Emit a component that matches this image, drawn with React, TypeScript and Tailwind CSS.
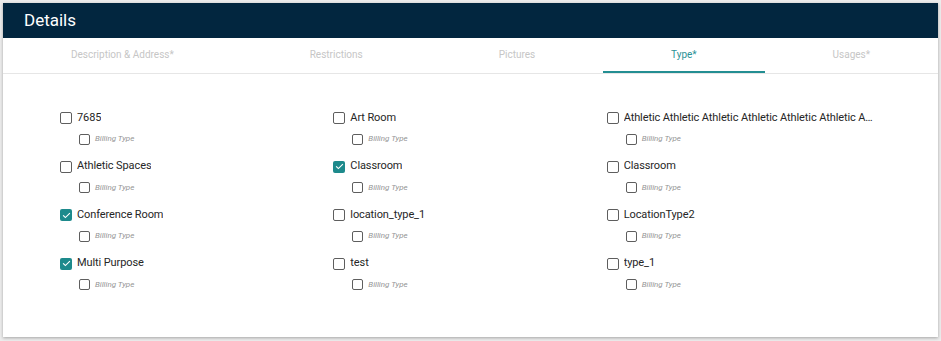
import React from 'react';

type TypeItem = { label: string; checked: boolean };

const tabs = ['Description & Address*', 'Restrictions', 'Pictures', 'Type*', 'Usages*'];

// laid out column by column in the screenshot, rendered row by row in the grid
const items: TypeItem[] = [
  { label: '7685', checked: false },
  { label: 'Art Room', checked: false },
  { label: 'Athletic Athletic Athletic Athletic Athletic Athletic Athletic Athletic', checked: false },
  { label: 'Athletic Spaces', checked: false },
  { label: 'Classroom', checked: true },
  { label: 'Classroom', checked: false },
  { label: 'Conference Room', checked: true },
  { label: 'location_type_1', checked: false },
  { label: 'LocationType2', checked: false },
  { label: 'Multi Purpose', checked: true },
  { label: 'test', checked: false },
  { label: 'type_1', checked: false },
];

function Box({ checked, small }: { checked: boolean; small?: boolean }) {
  if (checked) {
    return (
      <span className="flex h-[12px] w-[12px] shrink-0 items-center justify-center rounded-[2px] bg-[#1d8a8c]">
        <svg width="9" height="9" viewBox="0 0 24 24" fill="none">
          <path d="M4 12.5l5 5L20 6.5" stroke="white" strokeWidth="3" strokeLinecap="square" />
        </svg>
      </span>
    );
  }
  return (
    <span
      className={
        small
          ? 'block h-[11px] w-[11px] shrink-0 rounded-[2px] border-[1.5px] border-[#5e5e5e]'
          : 'block h-[12px] w-[12px] shrink-0 rounded-[2px] border-[1.5px] border-[#5e5e5e]'
      }
    />
  );
}

function TypeCheck({ item }: { item: TypeItem }) {
  return (
    <div className="min-w-0 pr-[7px]">
      <div className="flex h-[16px] items-center gap-[5px]">
        <Box checked={item.checked} />
        <span className="truncate text-[11px] tracking-[-0.1px] text-[#262626]">{item.label}</span>
      </div>
      <div className="mt-[6px] flex h-[14px] items-center gap-[5px] pl-[19px]">
        <Box checked={false} small />
        <span className="text-[8px] italic text-[#959595]">Billing Type</span>
      </div>
    </div>
  );
}

export default function App() {
  return (
    <div className="h-[341px] w-[941px] bg-[#ececec] pt-[3px] pl-[3px] font-['Roboto',sans-serif]">
      <div className="h-[334px] w-[935px] bg-white shadow-[0_1px_3px_rgba(0,0,0,0.3)]">
        {/* Header */}
        <div className="flex h-[35px] items-center bg-[#02263f] pl-[21px]">
          <span className="text-[17px] text-white">Details</span>
        </div>

        {/* Tabs */}
        <div className="flex h-[36px] border-b border-[#e6e6e6]">
          {tabs.map((t) => {
            const active = t === 'Type*';
            return (
              <div
                key={t}
                className={
                  active
                    ? 'flex flex-auto items-center justify-center border-b-2 border-[#238e92] px-[2px] text-[10px] text-[#2b9296]'
                    : 'flex flex-auto items-center justify-center border-b-2 border-transparent px-[2px] text-[10px] text-[#c6c6c6]'
                }
              >
                {t}
              </div>
            );
          })}
        </div>

        {/* Types */}
        <div className="grid grid-cols-3 gap-y-[12.5px] pt-[36px] pl-[57px] pr-[58px]">
          {items.map((it, i) => (
            <TypeCheck key={i} item={it} />
          ))}
        </div>
      </div>
    </div>
  );
}
